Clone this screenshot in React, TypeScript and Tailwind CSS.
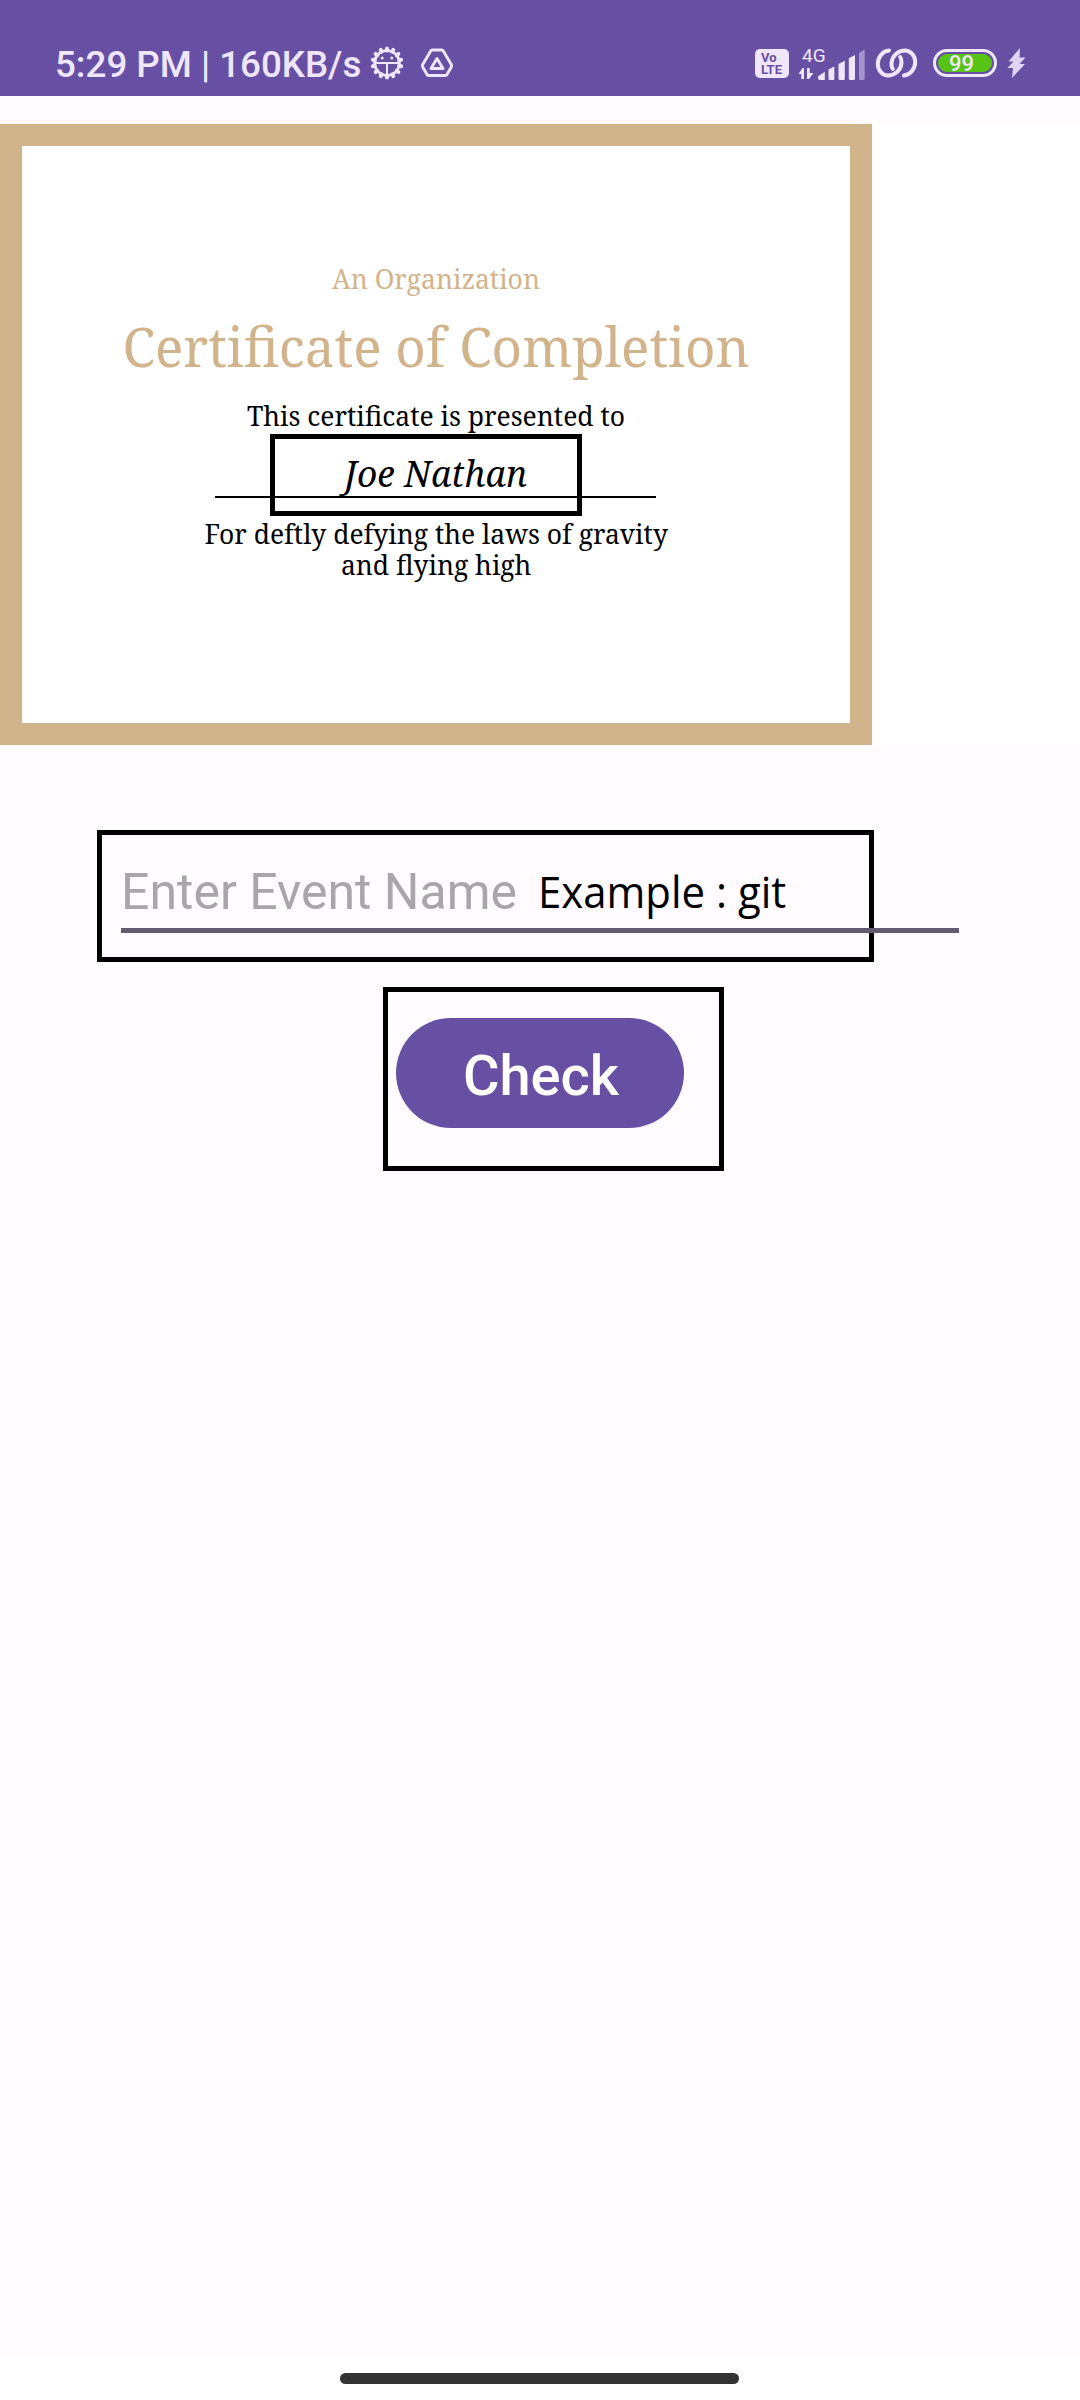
import React from "react";

const INK = "#efe6fc";

function GearIcon() {
  const teeth = Array.from({ length: 14 }, (_, i) => (i * 360) / 14);
  return (
    <svg className="ml-[9px] h-[34px] w-[34px] shrink-0" viewBox="-17 -17 34 34" fill="none" stroke={INK}>
      {teeth.map((a) => (
        <path key={a} d="M0 12.500V14.500" strokeWidth="4" strokeLinecap="round" transform={`rotate(${a})`} />
      ))}
      <circle r="12.4" strokeWidth="2.8" />
      <path d="M-11.500 0H11.500M0 0V11.500" strokeWidth="2" />
      <circle cx="-4.8" cy="-5" r="1.5" fill={INK} stroke="none" />
      <circle cx="4.8" cy="-5" r="1.5" fill={INK} stroke="none" />
    </svg>
  );
}

function DriveIcon() {
  return (
    <svg className="ml-[16px] h-[30px] w-[34px] shrink-0" viewBox="0 0 34 30" fill="none" stroke={INK} strokeWidth="2.9" strokeLinejoin="round">
      <path d="M12.200 2H21.800Q22.800 2 23.300 3L31.300 16.500Q32 17.700 31.300 19L27 26.500Q26.500 27.500 25.500 27.500H8.500Q7.500 27.500 7 26.500L2.700 19Q2 17.700 2.700 16.500L10.700 3Q11.200 2 12.200 2Z" />
      <path d="M17 10.500L23 20.500H11Z" />
    </svg>
  );
}

function VolteIcon() {
  return (
    <div className="flex h-[29px] w-[34px] shrink-0 flex-col rounded-[5px] bg-[#efe6fc] pt-[3px] pl-[6px] font-['Roboto'] text-[13px] leading-[12px] font-bold text-[#6750a4]">
      <span>Vo</span>
      <span>LTE</span>
    </div>
  );
}

function SignalIcon() {
  return (
    <svg className="ml-[9px] h-[36px] w-[68px] shrink-0" viewBox="798 44 68 36" fill={INK}>
      <text x="802" y="60.500" fontFamily="Roboto" fontSize="19">4G</text>
      <path d="M798.500 73L802.500 67H804V78H801.300V73ZM807 67H809.700V72H813.500L809 78H807Z" />
      <path d="M818 77V75.500L824.800 70.700V79H820Q818 79 818 77Z" />
      <path d="M828.500 68.500L834.300 65.500V77.500Q834.300 79 833 79H830Q828.500 79 828.500 77.500Z" />
      <path d="M838.500 63L844.800 59.800V77.500Q844.800 79 843.300 79H840Q838.500 79 838.500 77.500Z" />
      <path d="M848.800 57.300L855 54V77.500Q855 79 853.500 79H850.300Q848.800 79 848.800 77.500Z" />
      <path d="M859 52L864.700 48.500V77.500Q864.700 79 863.200 79H860.500Q859 79 859 77.500Z" opacity="0.45" />
    </svg>
  );
}

function LinkIcon() {
  return (
    <svg className="ml-[9px] h-[32px] w-[44px] shrink-0" viewBox="0 0 44 32" fill="none" stroke={INK} strokeWidth="4" strokeLinecap="round">
      <path d="M14 3.500C7.500 4 2.800 10.500 2.800 17C2.800 24 8 28.500 13 28.500C20 28.500 26 23 26.500 16C26.700 13.500 26.200 11.500 25.200 10" />
      <path d="M29 28.500C35.500 28 40.200 21.500 40.200 15C40.200 8 35 3.500 30 3.500C23 3.500 17 9 16.500 16C16.300 18.500 16.800 20.500 17.800 22" />
    </svg>
  );
}

function Battery() {
  return (
    <div className="ml-[14px] flex h-[28px] w-[64px] shrink-0 items-center rounded-full border-[3px] border-[#efe6fc] p-[2px]">
      <div className="flex h-[18px] w-full items-center rounded-full bg-[#57c415] pt-[1px] pl-[11px] font-['Roboto'] text-[22px] leading-[18px] font-medium text-[#efe6fc]">
        99
      </div>
    </div>
  );
}

function BoltIcon() {
  return (
    <svg className="ml-[10px] h-[30px] w-[19px] shrink-0" viewBox="0 0 19 30" fill="#e0d4f4">
      <path d="M13 0L1.500 13.500H6.500L0.500 20H6L5 30L18 16H12.500L18.500 9.500H12.500Z" />
    </svg>
  );
}

function StatusBar() {
  return (
    <header className="flex h-[96px] shrink-0 items-center bg-[#6750a4] pt-[30px] pr-[54px] pl-[55px]">
      <span className="mt-[3px] font-['Roboto'] text-[36.7px] leading-[36px] font-medium whitespace-nowrap text-[#efe6fc]">
        5:29 PM | 160KB/s
      </span>
      <GearIcon />
      <DriveIcon />
      <div className="ml-auto flex items-center">
        <VolteIcon />
        <SignalIcon />
        <LinkIcon />
        <Battery />
        <BoltIcon />
      </div>
    </header>
  );
}

function Certificate() {
  return (
    <section className="mt-[28px] bg-white">
      <div className="relative flex h-[621px] w-[872px] flex-col items-center border-[22px] border-[#d2b48c] bg-white pt-[115px] font-['Noto_Serif','DejaVu_Serif_Condensed','DejaVu_Serif',serif] whitespace-nowrap text-black">
        <p className="scale-x-[0.945] text-[28px] leading-[34px] text-[#d2b48c]">An Organization</p>
        <h1 className="mt-[20px] scale-x-[0.98] text-[54px] leading-[62px] text-[#d2b48c]">Certificate of Completion</h1>
        <p className="mt-[21px] scale-x-[0.945] text-[28px] leading-[34px]">This certificate is presented to</p>
        <p className="mt-[19px] scale-x-[0.995] text-[35.5px] leading-[44px] italic">Joe Nathan</p>
        <div className="mt-[1px] -ml-[1px] h-[2px] w-[441px] bg-black" />
        <p className="mt-[20px] scale-x-[0.945] text-center text-[28px] leading-[31px]">
          For deftly defying the laws of gravity
          <br />
          and flying high
        </p>
        <div className="absolute top-[288px] left-[248px] h-[82px] w-[312px] border-[5px] border-black" />
      </div>
    </section>
  );
}

function EventForm() {
  return (
    <main className="flex flex-col">
      <div className="mt-[85px] ml-[97px] h-[132px] w-[777px] border-[5px] border-black">
        <div className="ml-[19px] flex h-[98px] w-[838px] items-center border-b-[5px] border-[#625b71] pt-[20px]">
          <span className="font-['Roboto'] text-[50px] leading-[60px] whitespace-nowrap text-[#a9a5a9]">Enter Event Name</span>
          <span className="ml-[21px] origin-left scale-x-[0.975] font-['Open_Sans'] text-[43px] leading-[60px] whitespace-nowrap text-black">
            Example : git
          </span>
        </div>
      </div>
      <div className="mt-[25px] ml-[383px] h-[184px] w-[341px] border-[5px] border-black pt-[26px] pl-[8px]">
        <button className="h-[110px] w-[288px] rounded-full bg-[#6750a4] pt-[6px] pl-[2px] font-['Roboto'] text-[56px] leading-[60px] font-medium text-white">
          Check
        </button>
      </div>
    </main>
  );
}

export default function App() {
  return (
    <div className="flex h-[2400px] w-[1080px] flex-col overflow-hidden bg-[#fffbff]">
      <StatusBar />
      <Certificate />
      <EventForm />
      <footer className="mt-auto flex h-[43px] justify-center bg-white pt-[16px]">
        <div className="mr-[1px] h-[11px] w-[399px] rounded-full bg-[#333333]" />
      </footer>
    </div>
  );
}
